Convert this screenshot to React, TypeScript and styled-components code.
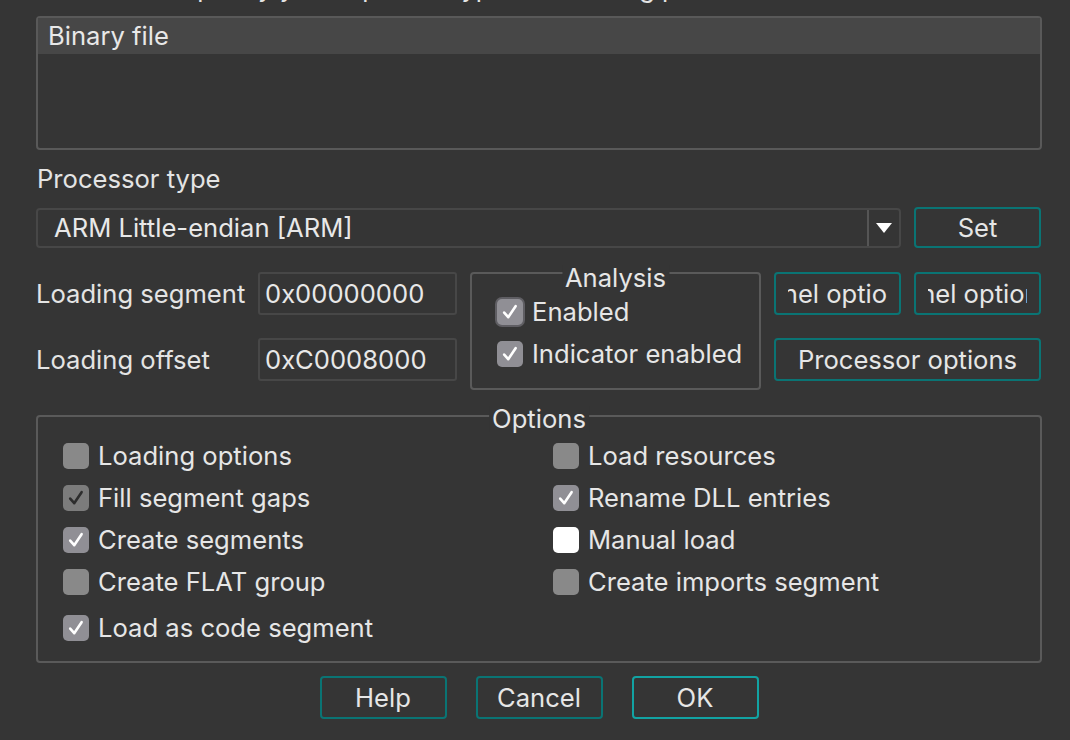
import React from "react";
import styled, { createGlobalStyle, css } from "styled-components";

const GlobalStyle = createGlobalStyle`
  html, body { margin: 0; padding: 0; background: #353535; }
  body { font-family: Inter, "Open Sans", "Liberation Sans", sans-serif; color: #e4e4e4; }
  * { box-sizing: border-box; }
`;

const FONT = "25.6px";

const Dialog = styled.div`
  width: 1070px;
  height: 740px;
  padding: 0 28px 0 36px;
  display: flex;
  flex-direction: column;
  overflow: hidden;
`;

const CutCaption = styled.div`
  height: 16px;
  overflow: hidden;
  font-size: ${FONT};
  line-height: 26px;
  padding-left: 60px;
  white-space: nowrap;
  & > span { display: block; margin-top: -25px; }
`;

const ListBox = styled.div`
  height: 134px;
  border: 2px solid #595959;
  border-radius: 4px;
  background: #353535;
  display: flex;
  flex-direction: column;
`;

const ListHeader = styled.div`
  height: 36px;
  background: #474747;
  font-size: ${FONT};
  line-height: 36px;
  padding-left: 10px;
  color: #e8e8e8;
`;

const Label = styled.div`
  font-size: ${FONT};
  line-height: 30px;
  color: #e4e4e4;
  white-space: nowrap;
`;

const SectionLabel = styled(Label)`
  margin-top: 14px;
  padding-left: 1px;
`;

const ComboRow = styled.div`
  display: flex;
  align-items: center;
  gap: 13px;
  margin-top: 13px;
`;

const Combo = styled.div`
  width: 865px;
  height: 40px;
  border: 2px solid #474747;
  border-radius: 4px;
  display: flex;
  align-items: center;
`;

const ComboText = styled.div`
  flex: 1;
  font-size: ${FONT};
  padding-left: 16px;
  color: #e8e8e8;
`;

const ComboArrow = styled.div`
  width: 32px;
  height: 100%;
  border-left: 2px solid #555;
  display: flex;
  align-items: center;
  justify-content: center;
`;

const Button = styled.button<{ $w?: number; $h?: number; $bright?: boolean; $span?: boolean }>`
  width: ${(p) => p.$w ?? 127}px;
  height: ${(p) => p.$h ?? 43}px;
  background: transparent;
  border: 2px solid ${(p) => (p.$bright ? "#12a3a3" : "#0a7474")};
  border-radius: 4px;
  color: #e6e6e6;
  font-family: inherit;
  font-size: ${FONT};
  padding: 0 12px;
  white-space: nowrap;
  display: flex;
  align-items: center;
  justify-content: center;
  ${(p) =>
    p.$span &&
    css`
      grid-column: 1 / span 2;
    `}
`;

const ButtonClip = styled.span`
  width: 100%;
  overflow: hidden;
  display: flex;
  justify-content: center;
`;

const MidRow = styled.div`
  display: flex;
  align-items: flex-start;
  margin-top: 24px;
`;

const FieldGrid = styled.div`
  display: grid;
  grid-template-columns: 222px 199px;
  row-gap: 23px;
  align-items: center;
  width: 434px;
`;

const HexInput = styled.div`
  height: 43px;
  border: 2px solid #474747;
  border-radius: 3px;
  font-size: ${FONT};
  line-height: 39px;
  padding-left: 5px;
  color: #e8e8e8;
`;

const GroupFrame = styled.div<{ $w: number; $h: number }>`
  position: relative;
  width: ${(p) => p.$w}px;
  height: ${(p) => p.$h}px;
  border: 2px solid #5a5a5a;
  border-radius: 4px;
  flex: none;
`;

const GroupTitle = styled.div<{ $drop: number }>`
  position: absolute;
  top: ${(p) => -15 + p.$drop}px;
  left: 50%;
  transform: translateX(-50%);
  padding: 0 3px;
  background: #353535;
  font-size: ${FONT};
  line-height: 26px;
  color: #e6e6e6;
  white-space: nowrap;
`;

const AnalysisBody = styled.div`
  display: flex;
  flex-direction: column;
  gap: 12px;
  padding: 23px 0 0 25px;
`;

const CheckRow = styled.label`
  display: flex;
  align-items: center;
  gap: 9px;
  font-size: ${FONT};
  line-height: 30px;
  color: #e6e6e6;
  white-space: nowrap;
`;

type BoxKind = "off" | "on" | "dim" | "white";

const Box = styled.span<{ $kind: BoxKind; $focus?: boolean }>`
  width: 26px;
  height: 26px;
  border-radius: 5px;
  flex: none;
  display: flex;
  align-items: center;
  justify-content: center;
  background: ${(p) =>
    p.$kind === "white" ? "#ffffff" : p.$kind === "on" ? "#908f95" : p.$kind === "dim" ? "#7c7c7c" : "#898989"};
  ${(p) =>
    p.$focus &&
    css`
      box-shadow: 0 0 0 2px #5f5e63;
    `}
`;

const Check = ({ kind, focus }: { kind: BoxKind; focus?: boolean }) => (
  <Box $kind={kind} $focus={focus}>
    {(kind === "on" || kind === "dim") && (
      <svg width="20" height="20" viewBox="0 0 20 20">
        <path
          d="M4.2 10.6 L8.2 15.2 L15.6 4.2"
          fill="none"
          stroke={kind === "on" ? "#ffffff" : "#2d2d2d"}
          strokeWidth="2.6"
          strokeLinecap="round"
          strokeLinejoin="round"
        />
      </svg>
    )}
  </Box>
);

const SideButtons = styled.div`
  display: grid;
  grid-template-columns: 127px 127px;
  column-gap: 13px;
  row-gap: 23px;
  margin-left: 13px;
`;

const OptionsFrame = styled(GroupFrame)`
  margin-top: 25px;
`;

const OptionsGrid = styled.div`
  display: grid;
  grid-template-columns: 490px 1fr;
  grid-template-rows: repeat(4, 42px) 50px;
  padding: 18px 0 0 25px;
  align-items: center;
`;

const Footer = styled.div`
  display: flex;
  justify-content: center;
  gap: 29px;
  margin-top: 13px;
`;

export default function App() {
  return (
    <>
      <GlobalStyle />
      <Dialog>
        <CutCaption>
          <span>Please specify your input file type and loading parameters</span>
        </CutCaption>
        <ListBox>
          <ListHeader>Binary file</ListHeader>
        </ListBox>

        <SectionLabel>Processor type</SectionLabel>
        <ComboRow>
          <Combo>
            <ComboText>ARM Little-endian [ARM]</ComboText>
            <ComboArrow>
              <svg width="18" height="12" viewBox="0 0 18 12">
                <path d="M1 1 H17 L9 11 Z" fill="#ffffff" />
              </svg>
            </ComboArrow>
          </Combo>
          <Button $h={41}>Set</Button>
        </ComboRow>

        <MidRow>
          <FieldGrid>
            <Label>Loading segment</Label>
            <HexInput>0x00000000</HexInput>
            <Label>Loading offset</Label>
            <HexInput>0xC0008000</HexInput>
          </FieldGrid>
          <GroupFrame $w={291} $h={118}>
            <GroupTitle $drop={6}>Analysis</GroupTitle>
            <AnalysisBody>
              <CheckRow>
                <Check kind="on" focus />
                Enabled
              </CheckRow>
              <CheckRow>
                <Check kind="on" />
                Indicator enabled
              </CheckRow>
            </AnalysisBody>
          </GroupFrame>
          <SideButtons>
            <Button>
              <ButtonClip>Kernel options 1</ButtonClip>
            </Button>
            <Button>
              <ButtonClip>Kernel options 2</ButtonClip>
            </Button>
            <Button $w={267} $span>
              Processor options
            </Button>
          </SideButtons>
        </MidRow>

        <OptionsFrame $w={1006} $h={248}>
          <GroupTitle $drop={4}>Options</GroupTitle>
          <OptionsGrid>
            <CheckRow><Check kind="off" />Loading options</CheckRow>
            <CheckRow><Check kind="off" />Load resources</CheckRow>
            <CheckRow><Check kind="dim" />Fill segment gaps</CheckRow>
            <CheckRow><Check kind="on" />Rename DLL entries</CheckRow>
            <CheckRow><Check kind="on" />Create segments</CheckRow>
            <CheckRow><Check kind="white" />Manual load</CheckRow>
            <CheckRow><Check kind="off" />Create FLAT group</CheckRow>
            <CheckRow><Check kind="off" />Create imports segment</CheckRow>
            <CheckRow><Check kind="on" />Load as code segment</CheckRow>
          </OptionsGrid>
        </OptionsFrame>

        <Footer>
          <Button>Help</Button>
          <Button>Cancel</Button>
          <Button $bright>OK</Button>
        </Footer>
      </Dialog>
    </>
  );
}
